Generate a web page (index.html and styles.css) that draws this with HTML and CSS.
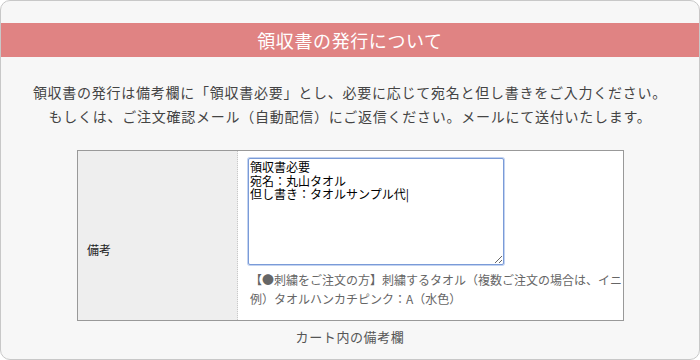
FILE: index.html
```html
<!DOCTYPE html>
<html lang="ja">
<head>
    <meta charset="UTF-8">
    <meta name="viewport" content="width=device-width, initial-scale=1.0">
    <title>領収書の発行について</title>
    <link rel="stylesheet" href="styles.css">
</head>
<body>
    <div class="card">
        <h2 class="title">領収書の発行について</h2>
        <p class="lead">
            領収書の発行は備考欄に「領収書必要」とし、必要に応じて宛名と但し書きをご入力ください。<br>
            もしくは、ご注文確認メール（自動配信）にご返信ください。メールにて送付いたします。
        </p>

        <div class="shot">
            <table class="remarks">
                <tr>
                    <th>備考</th>
                    <td>
                        <textarea rows="8">領収書必要
宛名：丸山タオル
但し書き：タオルサンプル代|</textarea>
                        <div class="note">
                            【●刺繍をご注文の方】刺繍するタオル（複数ご注文の場合は、イニシャルの前に番号を記入）<br>
                            例）タオルハンカチピンク：A（水色）
                        </div>
                    </td>
                </tr>
            </table>
        </div>
        <p class="caption">カート内の備考欄</p>
    </div>
</body>
</html>
```

FILE: styles.css
```css
html, body {
    margin: 0;
    padding: 0;
}

body {
    font-family: "Noto Sans CJK JP", "Noto Sans", sans-serif;
    background-color: #ffffff;
    color: #444;
}

.card {
    box-sizing: border-box;
    width: 700px;
    height: 360px;
    border: 1px solid #c8c8c8;
    border-radius: 10px;
    background-color: #f7f7f7;
    padding-top: 22px;
    overflow: hidden;
}

.title {
    margin: 0;
    height: 34px;
    line-height: 34px;
    background-color: #e08383;
    color: #fff;
    font-size: 18px;
    font-weight: normal;
    letter-spacing: 0.6px;
    text-align: center;
}

.lead {
    margin: 23px 0 0;
    font-size: 14px;
    line-height: 24px;
    text-align: center;
    color: #444;
    letter-spacing: 0.75px;
}

.shot {
    display: flex;
    justify-content: flex-start;
    margin: 22px 0 0 76px;
}

.remarks {
    width: 547px;
    height: 171px;
    border: 1px solid #999;
    border-collapse: collapse;
    background-color: #fff;
    font-size: 12px;
    table-layout: fixed;
}

.remarks th {
    width: 150px;
    padding: 28px 0 0 9px;
    background-color: #eee;
    border-right: 1px dotted #c8c8c8;
    font-weight: normal;
    text-align: left;
    color: #222;
}

.remarks td {
    padding: 7px 0 0 10px;
    vertical-align: top;
    overflow: hidden;
}

.remarks textarea {
    display: block;
    box-sizing: border-box;
    width: 256px;
    height: 107px;
    margin: 0;
    padding: 1px 1px;
    border: 1px solid #7a9bd8;
    box-shadow: 0 0 0 1px #c3d3f0;
    border-radius: 2px;
    font-family: "Noto Sans CJK JP", sans-serif;
    font-size: 12px;
    line-height: 13.5px;
    color: #000;
    resize: both;
}

.note {
    margin-top: 5px;
    padding-left: 2px;
    white-space: nowrap;
    font-size: 12px;
    line-height: 19px;
    color: #666;
}

.caption {
    margin: 6px 0 0;
    font-size: 13px;
    letter-spacing: 0.6px;
    text-align: center;
    color: #555;
}
```
